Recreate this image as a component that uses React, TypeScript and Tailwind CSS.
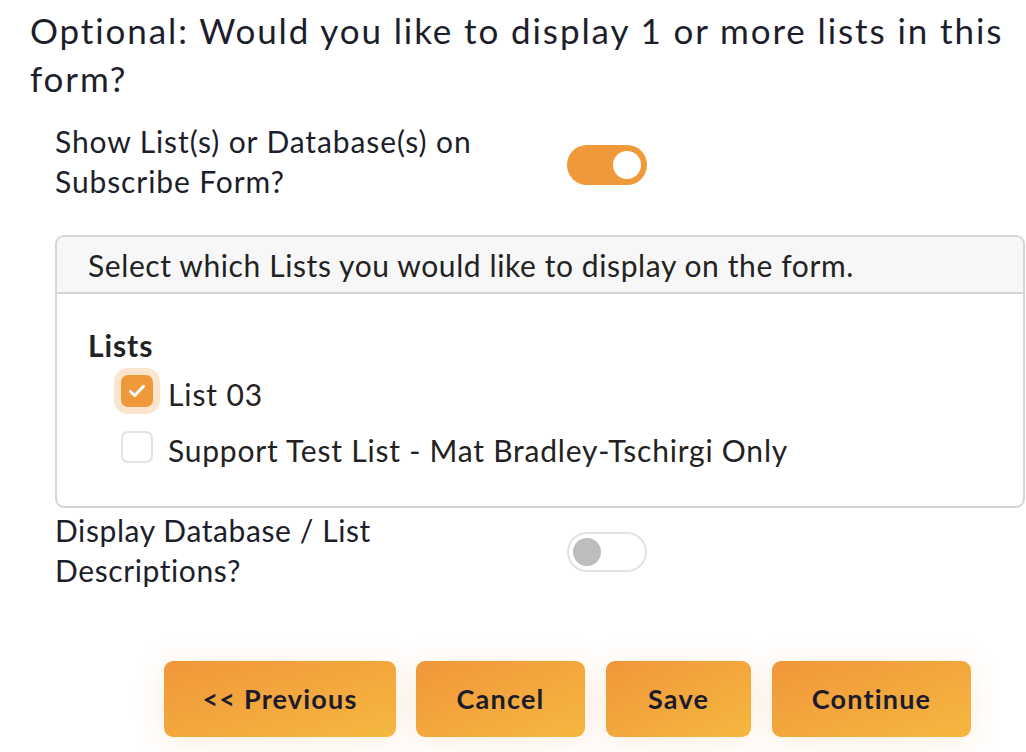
import React from "react";

function Toggle({ on }: { on: boolean }) {
  return on ? (
    <div className="w-[80px] h-[40px] rounded-full bg-[#f0993a] flex items-center justify-end px-[6px]">
      <div className="w-[28px] h-[28px] rounded-full bg-white" />
    </div>
  ) : (
    <div className="w-[80px] h-[40px] rounded-full bg-white border-2 border-[#dfe2e6] flex items-center justify-start px-[4px]">
      <div className="w-[28px] h-[28px] rounded-full bg-[#bdbdbd]" />
    </div>
  );
}

function Checkbox({ checked }: { checked: boolean }) {
  return checked ? (
    <div className="w-[32px] h-[32px] rounded-[7px] bg-[#f0993a] flex items-center justify-center shadow-[0_0_0_7px_#fce5ce]">
      <svg width="20" height="20" viewBox="0 0 16 16" fill="none">
        <path d="M2.8 8.4l3.4 3.2 7-7.4" stroke="white" strokeWidth="2.4" strokeLinecap="round" strokeLinejoin="round" />
      </svg>
    </div>
  ) : (
    <div className="w-[32px] h-[32px] rounded-[7px] bg-white border-2 border-[#dfe2e6]" />
  );
}

export default function App() {
  const btn =
    "h-[76px] rounded-[9px] bg-gradient-to-br from-[#f0963a] to-[#f5b840] text-[27px] tracking-[1.2px] font-bold text-[#1c1b2b] flex items-center justify-center shadow-[0_4px_30px_rgba(240,150,60,0.18)]";
  const body = "text-[30px] leading-[40px] tracking-[0.9px]";
  return (
    <div className="w-[1026px] h-[752px] bg-white overflow-hidden text-[#1d1e2c]" style={{ fontFamily: "Lato, 'Liberation Sans', sans-serif" }}>
      <h1 className="pl-[30px] w-[1024px] pt-[6px] text-[35px] leading-[48px] tracking-[1.9px] font-normal">
        Optional: Would you like to display 1 or more lists in this form?
      </h1>
      <div className="pl-[55px] pr-[1px]">
        <div className="mt-[19px] flex items-center">
          <div className={"w-[512px] " + body}>
            Show List(s) or Database(s) on
            <br />
            Subscribe Form?
          </div>
          <div className="mt-[8px]">
            <Toggle on={true} />
          </div>
        </div>
        <div className="mt-[34px] border-2 border-[#d5d5d5] rounded-[9px] overflow-hidden">
          <div className="bg-[#f7f7f7] border-b-2 border-[#d5d5d5] h-[57px] pl-[31px] flex items-center text-[#222] text-[30px] leading-[40px] tracking-[0.6px]">
            Select which Lists you would like to display on the form.
          </div>
          <div className="pl-[31px] pt-[31px] pb-[35px]">
            <div className={"font-bold text-[#222] " + body}>Lists</div>
            <div className="mt-[2px] pl-[33px] flex flex-col gap-[8px]">
              <div className="h-[48px] flex items-center gap-[15px]">
                <Checkbox checked={true} />
                <span className={"mt-[6px] text-[#222] " + body}>List 03</span>
              </div>
              <div className="h-[48px] flex items-center gap-[15px]">
                <Checkbox checked={false} />
                <span className="mt-[6px] text-[#222] text-[30px] leading-[40px] tracking-[0.78px]">
                  Support Test List - Mat Bradley-Tschirgi Only
                </span>
              </div>
            </div>
          </div>
        </div>
        <div className="mt-[2px] flex items-center">
          <div className="w-[512px] text-[30px] leading-[40px] tracking-[0.6px]">
            Display Database / List
            <br />
            Descriptions?
          </div>
          <div className="mt-[4px]">
            <Toggle on={false} />
          </div>
        </div>
      </div>
      <div className="mt-[71px] pl-[164px] flex">
        <button className={btn + " w-[232px]"}>&lt;&lt; Previous</button>
        <button className={btn + " ml-[20px] w-[169px]"}>Cancel</button>
        <button className={btn + " ml-[21px] w-[145px]"}>Save</button>
        <button className={btn + " ml-[21px] w-[199px]"}>Continue</button>
      </div>
    </div>
  );
}
